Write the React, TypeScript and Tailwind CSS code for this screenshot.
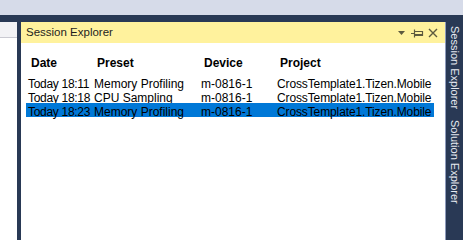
const rows = [
  { date: "Today 18:11", preset: "Memory Profiling", device: "m-0816-1", project: "CrossTemplate1.Tizen.Mobile" },
  { date: "Today 18:18", preset: "CPU Sampling", device: "m-0816-1", project: "CrossTemplate1.Tizen.Mobile" },
  { date: "Today 18:23", preset: "Memory Profiling", device: "m-0816-1", project: "CrossTemplate1.Tizen.Mobile", selected: true },
];

const cols = "grid w-[408px] grid-cols-[66px_107px_76px_159px]";

export default function App() {
  return (
    <div className="w-[463px] h-[240px] flex flex-col bg-[#293955] overflow-hidden font-['Liberation_Sans',Arial,sans-serif] text-[12px] text-black">
      {/* menu strip */}
      <div className="h-[15px] bg-[#d6dbe9] shrink-0" />

      <div className="flex-1 flex pt-[7px] min-h-0">
        {/* partly hidden left window */}
        <div className="w-[17px] flex flex-col bg-white">
          <div className="h-[16px] bg-[#f2f2f5] border-b border-[#c9c9d1]" />
        </div>

        <div className="w-[4px]" />

        {/* Session Explorer */}
        <div className="w-[424px] flex flex-col bg-white">
          <div className="h-[21px] bg-[#fff29d] flex items-center pl-[5px] pr-[7px]">
            <span className="flex-1 text-[11.5px] text-[#1e1e1e]">Session Explorer</span>
            <svg width="41" height="12" viewBox="0 0 41 12" className="text-[#5d5a3f]">
              <path d="M1 4 L8 4 L4.5 8 Z" fill="currentColor" />
              <path d="M14 6.5 H17.5 M17.5 2.5 V10.5 M17.5 4.5 H25.5 V8.5 H17.5 M17.5 7.5 H25.5" stroke="currentColor" strokeWidth="1.2" fill="none" />
              <path d="M32 2 L40 10 M40 2 L32 10" stroke="currentColor" strokeWidth="1.4" fill="none" />
            </svg>
          </div>

          <div className="flex-1 pt-[11px] pl-[5px]">
            <div className={`${cols} h-[14px] items-center font-bold`}>
              <span className="pl-[5px]">Date</span>
              <span className="pl-[5px]">Preset</span>
              <span className="pl-[5px]">Device</span>
              <span className="pl-[5px]">Project</span>
            </div>
            <div className="mt-[7px] flex flex-col">
              {rows.map((r) => (
                <div
                  key={r.date}
                  className={`${cols} h-[14px] items-center whitespace-nowrap ${r.selected ? "bg-[#0078d7]" : ""}`}
                >
                  <span className="pl-[2px] tracking-[-0.3px]">{r.date}</span>
                  <span className="pl-[2px]">{r.preset}</span>
                  <span className="pl-[2px]">{r.device}</span>
                  <span className="pl-[2px] tracking-[-0.12px]">{r.project}</span>
                </div>
              ))}
            </div>
          </div>
        </div>

        {/* auto-hide tab strip */}
        <div className="flex-1 border-l border-[#8e9bbc] flex justify-center pt-[4px]">
          <div className="[writing-mode:vertical-rl] text-[11px] text-[#e6e9f0] flex gap-[11px] leading-[17px]">
            <span>Session Explorer</span>
            <span>Solution Explorer</span>
          </div>
        </div>
      </div>
    </div>
  );
}
